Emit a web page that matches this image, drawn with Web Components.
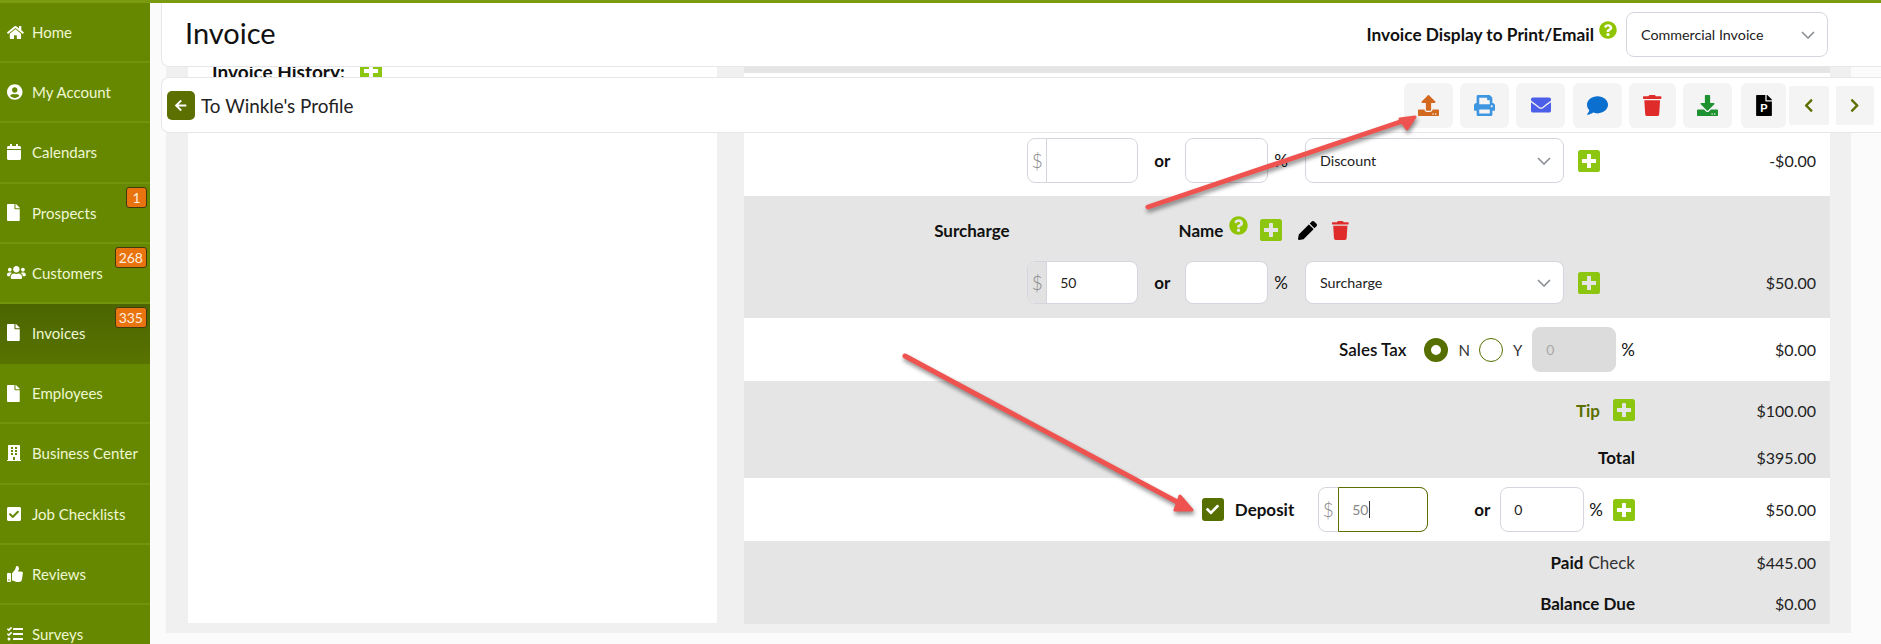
<!DOCTYPE html>
<html><head><meta charset="utf-8"><title>Invoice</title>
<style>
html,body{margin:0;padding:0;height:644px;overflow:hidden;background:#fff;font-family:"Lato","Open Sans",sans-serif;color:#111}
</style></head><body>
<app-shell>
  <side-nav slot="nav">
    <nav-item icon="home" label="Home"></nav-item>
    <nav-item icon="user" label="My Account"></nav-item>
    <nav-item icon="calendar" label="Calendars"></nav-item>
    <nav-item icon="file" label="Prospects" badge="1"></nav-item>
    <nav-item icon="users" label="Customers" badge="268"></nav-item>
    <nav-item icon="file" label="Invoices" badge="335" active></nav-item>
    <nav-item icon="file" label="Employees"></nav-item>
    <nav-item icon="building" label="Business Center"></nav-item>
    <nav-item icon="checksq" label="Job Checklists"></nav-item>
    <nav-item icon="thumbs" label="Reviews"></nav-item>
    <nav-item icon="tasks" label="Surveys"></nav-item>
  </side-nav>
  <page-header></page-header>
  <peek-strip></peek-strip>
  <action-toolbar>
    <tool-button icon="upload" color="#d2691e" style="width:49px"></tool-button>
    <tool-button icon="print" color="#3f96e0" style="width:49px;margin-left:7px"></tool-button>
    <tool-button icon="envelope" color="#4c5fe8" style="width:49px;margin-left:7px"></tool-button>
    <tool-button icon="comment" color="#0a6fcf" style="width:49px;margin-left:8px"></tool-button>
    <tool-button icon="trash" color="#e02b2b" style="width:47px;margin-left:7px"></tool-button>
    <tool-button icon="download" color="#1e9130" style="width:49px;margin-left:7px"></tool-button>
    <tool-button icon="pfile" color="#000" style="width:45px;margin-left:9px"></tool-button>
    <tool-button icon="left" color="#5b7000" small style="width:40px;margin-left:3px"></tool-button>
    <tool-button icon="right" color="#5b7000" small style="width:38px;margin-left:7px"></tool-button>
  </action-toolbar>
  <invoice-body>
    <inv-row h="63" pb="8" amount="-$0.00">
      <money-input style="width:111px"></money-input>
      <inv-text bold style="margin-left:16px">or</inv-text>
      <text-input style="width:83px;margin-left:15px"></text-input>
      <inv-text style="margin-left:6px">%</inv-text>
      <select-box label="Discount" style="width:259px;height:45px;margin-left:17px"></select-box>
      <fa-icon name="plus" size="22" color="#8cc610" style="margin-left:14px;margin-right:35px"></fa-icon>
    </inv-row>
    <inv-row grey h="65" pt="3">
      <inv-text bold>Surcharge</inv-text>
      <inv-text bold style="margin-left:169px">Name</inv-text>
      <fa-icon name="help" size="19" color="#8fc400" style="margin-left:6px;margin-top:-9px"></fa-icon>
      <fa-icon name="plus" size="22" color="#8cc610" style="margin-left:12px"></fa-icon>
      <fa-icon name="pencil" size="19" color="#000" style="margin-left:16px"></fa-icon>
      <fa-icon name="trash" size="19" color="#e02b2b" style="margin-left:15px;margin-right:286px"></fa-icon>
    </inv-row>
    <inv-row grey h="57" pb="14" amount="$50.00">
      <money-input value="50" filled style="width:111px;height:43px"></money-input>
      <inv-text bold style="margin-left:16px">or</inv-text>
      <text-input style="width:83px;height:43px;margin-left:15px"></text-input>
      <inv-text style="margin-left:6px">%</inv-text>
      <select-box label="Surcharge" style="width:259px;height:43px;margin-left:17px"></select-box>
      <fa-icon name="plus" size="22" color="#8cc610" style="margin-left:14px;margin-right:35px"></fa-icon>
    </inv-row>
    <inv-row h="63" amount="$0.00">
      <inv-text semi>Sales Tax</inv-text>
      <radio-dot checked style="margin-left:17px"></radio-dot>
      <inv-text muted style="margin-left:11px;font-size:15px">N</inv-text>
      <radio-dot style="margin-left:9px"></radio-dot>
      <inv-text muted style="margin-left:10px;font-size:15px">Y</inv-text>
      <text-input disabled value="0" style="width:84px;margin-left:10px"></text-input>
      <inv-text style="margin-left:5px">%</inv-text>
    </inv-row>
    <inv-row grey h="58" amount="$100.00">
      <inv-text bold color="#5b7000">Tip</inv-text>
      <fa-icon name="plus" size="22" color="#8cc610" style="margin-left:13px"></fa-icon>
    </inv-row>
    <inv-row grey h="39" pb="3" amount="$395.00"><inv-text bold>Total</inv-text></inv-row>
    <inv-row h="63" amount="$50.00">
      <check-box></check-box>
      <inv-text bold style="margin-left:11px">Deposit</inv-text>
      <money-input value="50" focused style="width:110px;margin-left:24px"></money-input>
      <inv-text bold style="margin-left:46px">or</inv-text>
      <text-input value="0" style="width:84px;margin-left:10px"></text-input>
      <inv-text style="margin-left:5px">%</inv-text>
      <fa-icon name="plus" size="22" color="#8cc610" style="margin-left:10px"></fa-icon>
    </inv-row>
    <inv-row grey h="42" amount="$445.00"><inv-text bold>Paid</inv-text><inv-text muted style="margin-left:5px">Check</inv-text></inv-row>
    <inv-row grey h="41" amount="$0.00"><inv-text bold>Balance Due</inv-text></inv-row>
  </invoice-body>
  <arrow-notes></arrow-notes>
</app-shell>
<script>
const P={
home:[576,512,"M280.37 148.26L96 300.11V464a16 16 0 0 0 16 16l112.06-.29a16 16 0 0 0 15.92-16V368a16 16 0 0 1 16-16h64a16 16 0 0 1 16 16v95.64a16 16 0 0 0 16 16.05L464 480a16 16 0 0 0 16-16V300L295.67 148.26a12.19 12.19 0 0 0-15.3 0zM571.6 251.47L488 182.56V44.05a12 12 0 0 0-12-12h-56a12 12 0 0 0-12 12v72.61L318.47 43a48 48 0 0 0-61 0L4.34 251.47a12 12 0 0 0-1.6 16.9l25.5 31A12 12 0 0 0 45.15 301l235.22-193.74a12.19 12.19 0 0 1 15.3 0L530.9 301a12 12 0 0 0 16.9-1.6l25.5-31a12 12 0 0 0-1.7-16.93z"],
user:[496,512,"M248 8C111 8 0 119 0 256s111 248 248 248 248-111 248-248S385 8 248 8zm0 96c48.6 0 88 39.4 88 88s-39.4 88-88 88-88-39.4-88-88 39.4-88 88-88zm0 344c-58.7 0-111.3-26.6-146.5-68.2 18.8-35.4 55.6-59.8 98.5-59.8 2.4 0 4.8.4 7.1 1.1 13 4.2 26.6 6.9 40.9 6.9 14.3 0 28-2.7 40.9-6.9 2.3-.7 4.7-1.1 7.1-1.1 42.9 0 79.7 24.4 98.5 59.8C359.3 421.4 306.7 448 248 448z"],
calendar:[448,512,"M12 192h424c6.6 0 12 5.4 12 12v260c0 26.5-21.5 48-48 48H48c-26.5 0-48-21.5-48-48V204c0-6.6 5.4-12 12-12zm436-44v-36c0-26.5-21.5-48-48-48h-48V12c0-6.6-5.4-12-12-12h-40c-6.6 0-12 5.4-12 12v52H160V12c0-6.6-5.4-12-12-12h-40c-6.6 0-12 5.4-12 12v52H48C21.5 64 0 85.5 0 112v36c0 6.6 5.4 12 12 12h424c6.6 0 12-5.4 12-12z"],
file:[384,512,"M224 136V0H24C10.7 0 0 10.7 0 24v464c0 13.3 10.7 24 24 24h336c13.3 0 24-10.7 24-24V160H248c-13.2 0-24-10.8-24-24zm160-14.1v6.1H256V0h6.1c6.4 0 12.5 2.5 17 7l97.9 98c4.5 4.5 7 10.6 7 16.9z"],
users:[640,512,"M96 224c35.3 0 64-28.7 64-64s-28.7-64-64-64-64 28.7-64 64 28.7 64 64 64zm448 0c35.3 0 64-28.7 64-64s-28.7-64-64-64-64 28.7-64 64 28.7 64 64 64zm32 32h-64c-17.6 0-33.5 7.1-45.1 18.6 40.3 22.1 68.9 62 75.1 109.4h66c17.7 0 32-14.3 32-32v-32c0-35.3-28.7-64-64-64zm-256 0c61.9 0 112-50.1 112-112S381.9 32 320 32 208 82.1 208 144s50.1 112 112 112zm76.8 32h-8.3c-20.8 10-43.9 16-68.5 16s-47.6-6-68.5-16h-8.3C179.6 288 128 339.6 128 403.2V432c0 26.5 21.5 48 48 48h288c26.5 0 48-21.5 48-48v-28.8c0-63.6-51.6-115.2-115.2-115.2zm-223.7-13.4C161.5 263.1 145.6 256 128 256H64c-35.3 0-64 28.7-64 64v32c0 17.7 14.3 32 32 32h65.9c6.3-47.4 34.9-87.3 75.2-109.4z"],
building:[448,512,"M436 480h-20V24c0-13.3-10.7-24-24-24H56C42.7 0 32 10.7 32 24v456H12c-6.6 0-12 5.4-12 12v20h448v-20c0-6.6-5.4-12-12-12zM128 76c0-6.6 5.4-12 12-12h40c6.6 0 12 5.4 12 12v40c0 6.6-5.4 12-12 12h-40c-6.6 0-12-5.4-12-12V76zm0 96c0-6.6 5.4-12 12-12h40c6.6 0 12 5.4 12 12v40c0 6.6-5.4 12-12 12h-40c-6.6 0-12-5.4-12-12v-40zm52 148h-40c-6.6 0-12-5.4-12-12v-40c0-6.6 5.4-12 12-12h40c6.6 0 12 5.4 12 12v40c0 6.6-5.4 12-12 12zm76 160h-64v-84c0-6.6 5.4-12 12-12h40c6.6 0 12 5.4 12 12v84zm64-172c0 6.6-5.4 12-12 12h-40c-6.6 0-12-5.4-12-12v-40c0-6.6 5.4-12 12-12h40c6.6 0 12 5.4 12 12v40zm0-96c0 6.6-5.4 12-12 12h-40c-6.6 0-12-5.4-12-12v-40c0-6.6 5.4-12 12-12h40c6.6 0 12 5.4 12 12v40zm0-96c0 6.6-5.4 12-12 12h-40c-6.6 0-12-5.4-12-12V76c0-6.6 5.4-12 12-12h40c6.6 0 12 5.4 12 12v40z"],
checksq:[448,512,"M400 480H48c-26.51 0-48-21.49-48-48V80c0-26.51 21.49-48 48-48h352c26.51 0 48 21.49 48 48v352c0 26.51-21.49 48-48 48zm-204.686-98.059l184-184c6.248-6.248 6.248-16.379 0-22.627l-22.627-22.627c-6.248-6.248-16.379-6.249-22.628 0L184 302.745l-70.059-70.059c-6.248-6.248-16.379-6.248-22.628 0l-22.627 22.627c-6.248 6.248-6.248 16.379 0 22.627l104 104c6.249 6.25 16.379 6.25 22.628.001z"],
thumbs:[512,512,"M104 224H24c-13.255 0-24 10.745-24 24v240c0 13.255 10.745 24 24 24h80c13.255 0 24-10.745 24-24V248c0-13.255-10.745-24-24-24zM64 472c-13.255 0-24-10.745-24-24s10.745-24 24-24 24 10.745 24 24-10.745 24-24 24zM384 81.452c0 42.416-25.97 66.208-33.277 94.548h101.723c33.397 0 59.397 27.746 59.553 58.098.084 17.938-7.546 37.249-19.439 49.197l-.11.11c9.836 23.337 8.237 56.037-9.308 79.469 8.681 25.895-.069 57.704-16.382 74.757 4.298 17.598 2.244 32.575-6.148 44.632C440.202 511.587 389.616 512 346.839 512l-2.845-.001c-48.287-.017-87.806-17.598-119.56-31.725-15.957-7.099-36.821-15.887-52.651-16.178-6.54-.12-11.783-5.457-11.783-11.998v-213.77c0-3.2 1.282-6.271 3.558-8.521 39.614-39.144 56.648-80.587 89.117-113.111 14.804-14.832 20.188-37.236 25.393-58.902C282.515 39.293 291.817 0 312 0c24 0 72 8 72 81.452z"],
tasks:[512,512,"M139.61 35.5a12 12 0 0 0-17 0L58.93 98.81l-22.7-22.12a12 12 0 0 0-17 0L3.53 92.41a12 12 0 0 0 0 17l47.59 47.4a12.78 12.78 0 0 0 17.61 0l15.59-15.62L156.52 69a12.09 12.09 0 0 0 .09-17zm0 159.19a12 12 0 0 0-17 0l-63.68 63.72-22.7-22.1a12 12 0 0 0-17 0L3.53 252a12 12 0 0 0 0 17L51 316.5a12.77 12.77 0 0 0 17.6 0l15.7-15.69 72.2-72.22a12 12 0 0 0 .09-16.9zM64 368c-26.49 0-48.59 21.5-48.59 48S37.53 464 64 464a48 48 0 0 0 0-96zm432 16H208a16 16 0 0 0-16 16v32a16 16 0 0 0 16 16h288a16 16 0 0 0 16-16v-32a16 16 0 0 0-16-16zm0-320H208a16 16 0 0 0-16 16v32a16 16 0 0 0 16 16h288a16 16 0 0 0 16-16V80a16 16 0 0 0-16-16zm0 160H208a16 16 0 0 0-16 16v32a16 16 0 0 0 16 16h288a16 16 0 0 0 16-16v-32a16 16 0 0 0-16-16z"],
trash:[448,512,"M432 32H312l-9.4-18.7A24 24 0 0 0 281.1 0H166.8a23.72 23.72 0 0 0-21.4 13.3L136 32H16A16 16 0 0 0 0 48v32a16 16 0 0 0 16 16h416a16 16 0 0 0 16-16V48a16 16 0 0 0-16-16zM53.2 467a48 48 0 0 0 47.9 45h245.8a48 48 0 0 0 47.9-45L416 128H32z"],
upload:[512,512,"M296 384h-80c-13.3 0-24-10.7-24-24V192h-87.7c-17.8 0-26.7-21.5-14.1-34.1L242.3 5.7c7.5-7.5 19.8-7.5 27.3 0l152.2 152.2c12.6 12.6 3.7 34.1-14.1 34.1H320v168c0 13.3-10.7 24-24 24zm216-8v112c0 13.3-10.7 24-24 24H24c-13.3 0-24-10.7-24-24V376c0-13.3 10.7-24 24-24h136v8c0 30.9 25.1 56 56 56h80c30.9 0 56-25.1 56-56v-8h136c13.3 0 24 10.7 24 24zm-124 88c0-11-9-20-20-20s-20 9-20 20 9 20 20 20 20-9 20-20zm64 0c0-11-9-20-20-20s-20 9-20 20 9 20 20 20 20-9 20-20z"],
download:[512,512,"M216 0h80c13.3 0 24 10.7 24 24v168h87.7c17.8 0 26.7 21.5 14.1 34.1L269.7 378.3c-7.5 7.5-19.8 7.5-27.3 0L90.1 226.1c-12.6-12.6-3.7-34.1 14.1-34.1H192V24c0-13.3 10.7-24 24-24zm296 376v112c0 13.3-10.7 24-24 24H24c-13.3 0-24-10.7-24-24V376c0-13.3 10.7-24 24-24h146.7l49 49c20.1 20.1 52.5 20.1 72.6 0l49-49H488c13.3 0 24 10.7 24 24zm-124 88c0-11-9-20-20-20s-20 9-20 20 9 20 20 20 20-9 20-20zm64 0c0-11-9-20-20-20s-20 9-20 20 9 20 20 20 20-9 20-20z"],
print:[512,512,"M448 192V77.25c0-8.49-3.37-16.62-9.37-22.63L393.37 9.37c-6-6-14.14-9.37-22.63-9.37H96C78.33 0 64 14.33 64 32v160c-35.35 0-64 28.65-64 64v112c0 8.84 7.16 16 16 16h48v96c0 17.67 14.33 32 32 32h320c17.67 0 32-14.33 32-32v-96h48c8.84 0 16-7.16 16-16V256c0-35.35-28.65-64-64-64zm-64 256H128v-96h256v96zm0-224H128V64h192v48c0 8.84 7.16 16 16 16h48v96zm48 72c-13.25 0-24-10.75-24-24 0-13.26 10.75-24 24-24s24 10.74 24 24c0 13.25-10.75 24-24 24z"],
envelope:[512,512,"M502.3 190.8c3.9-3.1 9.7-.2 9.7 4.7V400c0 26.5-21.5 48-48 48H48c-26.5 0-48-21.5-48-48V195.6c0-5 5.7-7.8 9.7-4.7 22.4 17.4 52.1 39.5 154.1 113.6 21.1 15.4 56.7 47.8 92.2 47.6 35.7.3 72-32.8 92.3-47.6 102-74.1 131.6-96.3 154-113.7zM256 320c23.2.4 56.6-29.2 73.4-41.4 132.7-96.3 142.8-104.7 173.4-128.7 5.8-4.5 9.2-11.5 9.2-18.9v-19c0-26.5-21.5-48-48-48H48C21.5 64 0 85.5 0 112v19c0 7.4 3.4 14.3 9.2 18.9 30.6 23.9 40.7 32.4 173.4 128.7 16.8 12.2 50.2 41.8 73.4 41.4z"],
comment:[512,512,"M256 32C114.6 32 0 125.1 0 240c0 49.6 21.4 95 57 130.7C44.5 421.1 2.7 466 2.2 466.5c-2.2 2.3-2.8 5.7-1.5 8.7S4.8 480 8 480c66.3 0 116-31.8 140.6-51.4 32.7 12.3 69 19.4 107.4 19.4 141.4 0 256-93.1 256-208S397.4 32 256 32z"],
pencil:[512,512,"M497.9 142.1l-46.1 46.1c-4.7 4.7-12.3 4.7-17 0l-111-111c-4.7-4.7-4.7-12.3 0-17l46.1-46.1c18.7-18.7 49.1-18.7 67.9 0l60.1 60.1c18.8 18.7 18.8 49.1 0 67.9zM284.2 99.8L21.6 362.4.4 483.9c-2.9 16.4 11.4 30.6 27.8 27.8l121.5-21.3 262.6-262.6c4.7-4.7 4.7-12.3 0-17l-111-111c-4.8-4.7-12.4-4.7-17.1 0z"],
help:[512,512,"M504 256c0 136.997-111.043 248-248 248S8 392.997 8 256C8 119.083 119.043 8 256 8s248 111.083 248 248zM262.655 90c-54.497 0-89.255 22.957-116.549 63.758-3.536 5.286-2.353 12.415 2.715 16.258l34.699 26.31c5.205 3.947 12.621 3.008 16.665-2.122 17.864-22.658 30.113-35.797 57.303-35.797 20.429 0 45.698 13.148 45.698 32.958 0 14.976-12.363 22.667-32.534 33.976C247.128 238.528 216 254.941 216 296v4c0 6.627 5.373 12 12 12h56c6.627 0 12-5.373 12-12v-1.333c0-28.462 83.186-29.647 83.186-106.667 0-58.002-60.165-102-116.531-102zM256 338c-25.365 0-46 20.635-46 46 0 25.364 20.635 46 46 46s46-20.636 46-46c0-25.365-20.635-46-46-46z"],
plus:[448,448,"M400 0H48C21.5 0 0 21.5 0 48v352c0 26.5 21.5 48 48 48h352c26.5 0 48-21.5 48-48V48c0-26.5-21.5-48-48-48zm-32 252c0 6.6-5.4 12-12 12h-92v92c0 6.6-5.4 12-12 12h-56c-6.6 0-12-5.4-12-12v-92H92c-6.6 0-12-5.4-12-12v-56c0-6.6 5.4-12 12-12h92V92c0-6.6 5.4-12 12-12h56c6.6 0 12 5.4 12 12v92h92c6.6 0 12 5.4 12 12v56z"],
check:[512,512,"M173.898 439.404l-166.4-166.4c-9.997-9.997-9.997-26.206 0-36.204l36.203-36.204c9.997-9.998 26.207-9.998 36.204 0L192 312.69 432.095 72.596c9.997-9.997 26.207-9.997 36.204 0l36.203 36.204c9.997 9.997 9.997 26.206 0 36.204l-294.4 294.401c-9.998 9.997-26.207 9.997-36.204-.001z"],
back:[448,512,"M257.5 445.1l-22.2 22.2c-9.4 9.4-24.6 9.4-33.9 0L7 273c-9.4-9.4-9.4-24.6 0-33.9L201.4 44.7c9.4-9.4 24.6-9.4 33.9 0l22.2 22.2c9.5 9.5 9.3 25-.4 34.3L136.6 216H424c13.3 0 24 10.7 24 24v32c0 13.3-10.7 24-24 24H136.6l120.5 114.8c9.8 9.3 10 24.8.4 34.3z"],
left:[320,512,"M34.52 239.03L228.87 44.69c9.37-9.37 24.57-9.37 33.94 0l22.67 22.67c9.36 9.36 9.37 24.52.04 33.9L131.49 256l154.02 154.75c9.34 9.38 9.32 24.54-.04 33.9l-22.67 22.67c-9.37 9.37-24.57 9.37-33.94 0L34.52 272.97c-9.37-9.37-9.37-24.57 0-33.94z"],
right:[320,512,"M285.476 272.971L91.132 467.314c-9.373 9.373-24.569 9.373-33.941 0l-22.667-22.667c-9.357-9.357-9.375-24.522-.04-33.901L188.505 256 34.484 101.255c-9.335-9.379-9.317-24.544.04-33.901l22.667-22.667c9.373-9.373 24.569-9.373 33.941 0L285.475 239.03c9.373 9.372 9.373 24.568.001 33.941z"]
};
const svg=(n,h,c,extra='')=>{const[w,ht,d]=P[n];return `<svg xmlns="http://www.w3.org/2000/svg" viewBox="0 0 ${w} ${ht}" height="${h}" width="${h*w/ht}" style="display:block;fill:${c}"><path d="${d}"/>${extra}</svg>`};
const def=(name,render)=>customElements.define(name,class extends HTMLElement{
  connectedCallback(){if(this.shadowRoot)return;const r=this.attachShadow({mode:'open'});r.innerHTML=render(this)}
});
const FONT='"Lato","Open Sans",sans-serif';
const chev=`<svg width="14" height="8" viewBox="0 0 14 8" style="display:block"><path d="M1 1l6 6 6-6" fill="none" stroke="#8a8f96" stroke-width="1.6"/></svg>`;

def('app-shell',()=>`<style>
:host{display:block;position:relative;width:1881px;height:644px;overflow:hidden;font-family:${FONT}}
.top{height:3px;background:#7a9a10}
.row{display:flex;height:641px}
.main{flex:1;min-width:0;background:#fbfbfb;padding-left:11px}
</style><div class="top"></div><div class="row"><slot name="nav"></slot><div class="main"><slot></slot></div></div>`);

def('side-nav',()=>`<style>:host{display:block;width:150px;flex:none;background:#668800;overflow:hidden}</style><slot></slot>`);

def('nav-item',e=>{const b=e.getAttribute('badge');
const h={file:17,users:15,home:15,tasks:16}[e.getAttribute('icon')]||16;
return `<style>
:host{display:block;height:60.2px;box-sizing:border-box;position:relative;border-bottom:2px solid #70940a}
.in{display:flex;align-items:center;height:58px;color:#eff7d3;font-size:15px;padding-left:7px}
:host([active]){background:linear-gradient(#4b6500,#587300);border-bottom-color:#587300}
.ic{width:25px;flex:none}
.b{position:absolute;right:3px;top:3px;background:#e8730f;border:1px solid #3f3a10;border-radius:3px;color:#fdeedd;font-size:14px;line-height:19px;padding:0 3px;min-width:13px;text-align:center}
</style><div class="in"><span class="ic">${svg(e.getAttribute('icon'),h,'#fff')}</span><span>${e.getAttribute('label')}</span></div>${b?`<span class="b">${b}</span>`:''}`});

def('fa-icon',e=>`<style>:host{display:block;flex:none}</style>${svg(e.getAttribute('name'),+e.getAttribute('size'),e.getAttribute('color'))}`);

def('select-box',e=>`<style>
:host{display:block;box-sizing:border-box;flex:none;background:#fff;border:1px solid #d5d5de;border-radius:8px;font-size:14.3px;color:#222}
.i{display:flex;align-items:center;justify-content:space-between;height:100%;padding:0 12px 0 14px}
</style><div class="i"><span>${e.getAttribute('label')}</span>${chev}</div>`);

def('page-header',()=>`<style>
:host{display:flex;align-items:center;box-sizing:border-box;height:64px;background:#fff;border:1px solid #e6e6ec;border-top:0;border-right:0;border-radius:0 0 0 8px;padding:0 53px 0 23px;font-family:${FONT}}
h1{font-size:29px;font-weight:400;margin:-5px 0 0;color:#111;flex:1}
.l{font-weight:700;font-size:17.3px;color:#111}
fa-icon{margin:-9px 9px 0 5px}
select-box{width:202px;height:45px}
</style><h1>Invoice</h1><span class="l">Invoice Display to Print/Email</span><fa-icon name="help" size="18" color="#8fc400"></fa-icon><select-box label="Commercial Invoice"></select-box>`);

def('peek-strip',()=>`<style>
:host{display:grid;grid-template-columns:22px 529px 27px 1086px 21px;height:10px;margin-left:5px;overflow:hidden;margin-right:30px;background:#f0f0f0}
.a{background:#fff;position:relative;overflow:hidden;display:flex;gap:15px;padding-left:24px}
.t{font-weight:700;font-size:19px;line-height:20px;margin-top:-5px;color:#111;white-space:nowrap}
fa-icon{margin-top:-7px}
.b{background:#fff}.b i{display:block;height:6px;background:#e5e5e5}
</style><span></span><div class="a"><span class="t">Invoice History:</span><fa-icon name="plus" size="22" color="#8cc610"></fa-icon></div><span></span><div class="b"><i></i></div><span></span>`);

def('action-toolbar',()=>`<style>
:host{display:flex;align-items:center;box-sizing:border-box;height:56px;background:#fff;border:1px solid #e6e6ec;border-right:0;border-radius:8px 0 0 8px;padding:0 7px 0 5px;position:relative;font-family:${FONT}}
.back{width:28px;height:29px;border-radius:5px;background:#5b7000;display:flex;align-items:center;justify-content:center;flex:none}
.t{font-size:18.9px;color:#222;margin-left:6px;flex:1}
</style><span class="back">${svg('back',13,'#fff')}</span><span class="t">To Winkle's Profile</span><slot></slot>`);

def('tool-button',e=>{const n=e.getAttribute('icon'),c=e.getAttribute('color');
let ic;
if(n==='pfile')ic=`<svg viewBox="0 0 384 512" height="21" width="16" style="display:block;fill:#000"><path d="${P.file[2]}"/><text x="192" y="420" text-anchor="middle" font-size="270" font-weight="700" font-family="Liberation Sans,sans-serif" fill="#fff">P</text></svg>`;
else if(n==='left'||n==='right')ic=svg(n,15,c);
else if(n==='envelope')ic=svg(n,20,c);
else ic=svg(n,21,c);
return `<style>:host{display:flex;align-items:center;justify-content:center;flex:none;box-sizing:border-box;height:45px;background:#f4f4f4;border-radius:6px}:host([small]){height:39px;border-radius:2px}</style>${ic}`});

def('invoice-body',()=>`<style>
:host{display:grid;grid-template-columns:529px 1086px;column-gap:27px;box-sizing:border-box;margin:0 30px 0 5px;padding:0 21px 10px 22px;background:#f0f0f0;height:500px}
.l{background:#fff;height:490px}
.r{height:490px;background:#fff;display:block}
</style><div class="l"></div><div class="r"><slot></slot></div>`);

def('inv-row',e=>`<style>
:host{display:grid;grid-template-columns:1fr 195px;box-sizing:border-box;height:${e.getAttribute('h')}px;padding-top:${e.getAttribute('pt')||0}px;padding-bottom:${e.getAttribute('pb')||0}px;background:${e.hasAttribute('grey')?'#e5e5e5':'#fff'};color:#111}
.m{display:flex;align-items:center;justify-content:flex-end}
.a{text-align:right;padding-right:14px;display:flex;align-items:center;justify-content:flex-end;font-size:16px;color:#222}
</style><div class="m"><slot></slot></div><div class="a">${e.getAttribute('amount')||''}</div>`);

def('inv-text',e=>`<style>
:host{display:block;flex:none;font-size:17px;color:${e.getAttribute('color')||(e.hasAttribute('muted')?'#333':'#111')};font-weight:${e.hasAttribute('bold')?700:e.hasAttribute('semi')?600:400}}
</style><slot></slot>`);

def('money-input',e=>{const v=e.getAttribute('value')||'',f=e.hasAttribute('focused'),fill=e.hasAttribute('filled');
return `<style>
:host{display:flex;flex:none;box-sizing:border-box;height:45px;background:#fff;border:1px solid #d5d5de;border-radius:8px;position:relative;font-size:14px}
.d{width:18px;flex:none;display:flex;align-items:center;justify-content:center;color:#888;font-size:19px;font-weight:300;border-right:1px solid ${f?'transparent':'#d5d5de'};background:${fill?'#e2e2e2':'transparent'};border-radius:7px 0 0 7px}
.v{flex:1;display:flex;align-items:center;padding-left:13px;color:${f?'#888':'#222'};${f?'border:1px solid #5b7000;border-radius:0 8px 8px 0;margin:-1px -1px -1px 0;':''}}
.c{display:inline-block;width:1px;height:17px;background:#333}
</style><span class="d">$</span><span class="v">${v}${f?'<i class="c"></i>':''}</span>`});

def('text-input',e=>{const d=e.hasAttribute('disabled');return `<style>
:host{display:flex;align-items:center;flex:none;box-sizing:border-box;height:45px;background:${d?'#dcdcdc':'#fff'};border:1px solid ${d?'#dcdcdc':'#d5d5de'};border-radius:8px;padding-left:13px;font-size:14px;color:${d?'#aaa':'#222'}}
</style>${e.getAttribute('value')||''}`});

def('radio-dot',e=>`<style>
:host{display:block;flex:none;box-sizing:border-box;width:24px;height:24px;border-radius:50%;background:#fff;border:${e.hasAttribute('checked')?'7px':'1px'} solid #556f00}
</style>`);

def('check-box',()=>`<style>
:host{display:flex;align-items:center;justify-content:center;flex:none;width:22px;height:23px;background:#556f00;border-radius:3px}
</style>${svg('check',13,'#fff')}`);

def('arrow-notes',()=>`<style>
:host{position:absolute;left:0;top:0;width:1881px;height:644px;pointer-events:none}
svg{display:block;filter:drop-shadow(1px 3px 2px rgba(0,0,0,.45))}
</style><svg width="1881" height="644" viewBox="0 0 1881 644">
<g fill="#ef5350" stroke="#ef5350" stroke-linecap="round" stroke-linejoin="round">
<path d="M1148 207L1403 121" fill="none" stroke-width="5"/><path d="M1415 117L1400 119 1407 129Z" stroke-width="3"/>
<path d="M905 356L1181 504" fill="none" stroke-width="5"/><path d="M1192 510L1180 496 1175 510Z" stroke-width="3"/>
</g></svg>`);
</script>
</body></html>
